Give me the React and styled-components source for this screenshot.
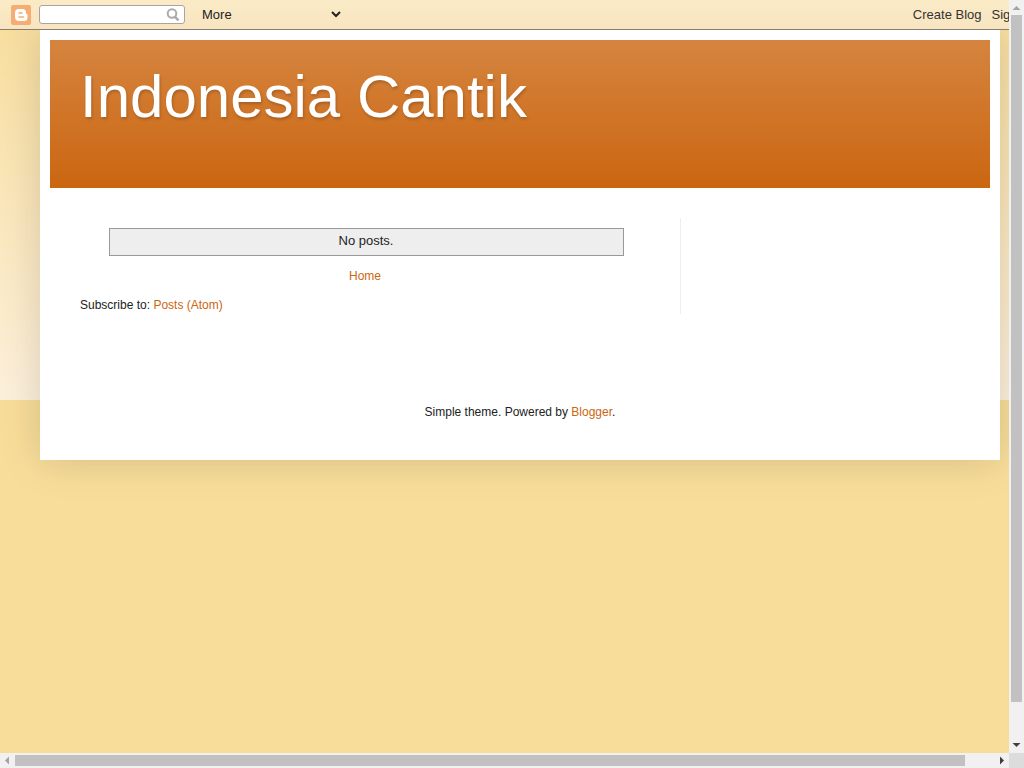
import React from 'react';
import styled, { createGlobalStyle } from 'styled-components';

const App = () => (
  <>
    <GlobalStyle />
    <Window>
      <Viewport>
        <Navbar>
          <LogoLink href="#blogger" aria-label="Blogger">
            <BloggerLogo />
          </LogoLink>
          <SearchForm role="search" onSubmit={(e) => e.preventDefault()}>
            <SearchInput type="text" name="q" aria-label="Search this blog" />
            <SearchButton type="submit" aria-label="Search">
              <SearchIcon />
            </SearchButton>
          </SearchForm>
          <MoreWrap>
            <MoreSelect aria-label="More" defaultValue="more">
              <option value="more">More</option>
              <option value="next">Next Blog</option>
            </MoreSelect>
            <ChevronIcon />
          </MoreWrap>
          <NavLinks>
            <a href="#create">Create Blog</a>
            <a href="#signin">Sign In</a>
          </NavLinks>
        </Navbar>

        <Content>
          <Header>
            <h1>Indonesia Cantik</h1>
          </Header>

          <Columns>
            <Main>
              <StatusMessage>No posts.</StatusMessage>
              <Pager>
                <a href="#home">Home</a>
              </Pager>
              <Feed>
                Subscribe to: <a href="#atom">Posts (Atom)</a>
              </Feed>
            </Main>
            <Sidebar />
          </Columns>

          <Footer>
            Simple theme. Powered by <a href="#blogger">Blogger</a>.
          </Footer>
        </Content>
      </Viewport>

      <Scrollbar $vertical>
        <Arrow direction="up" />
        <Track $vertical>
          <Thumb $size={687} />
          <Rest $size={36} />
        </Track>
        <Arrow direction="down" active />
      </Scrollbar>
      <Scrollbar>
        <Arrow direction="left" />
        <Track>
          <Thumb $size={950} />
          <Rest $size={29} />
        </Track>
        <Arrow direction="right" active />
      </Scrollbar>
      <Corner />
    </Window>
  </>
);

const BloggerLogo = () => (
  <svg width="20" height="20" viewBox="0 0 20 20" aria-hidden="true">
    <rect width="20" height="20" rx="2" fill="#f6ad73" />
    <path
      d="M8 4h3.500A3.500 3.500 0 0 1 15 7.500v.8c0 .5.3.8.8.8.4 0 .7.300.7.700V12.500A3.500 3.500 0 0 1 13 16H8a4 4 0 0 1-4-4V8a4 4 0 0 1 4-4z"
      fill="#fff"
    />
    <path d="M8 8h3M8 12h4.500" stroke="#f6ad73" strokeWidth="1.600" strokeLinecap="round" />
  </svg>
);

const SearchIcon = () => (
  <svg width="14" height="14" viewBox="0 0 14 14" fill="none" stroke="#aaa" aria-hidden="true">
    <circle cx="6" cy="5.500" r="4.300" strokeWidth="2" />
    <path d="M9 8.800l3.500 3.500" strokeWidth="2.400" />
  </svg>
);

const ChevronIcon = () => (
  <svg width="10" height="7" viewBox="0 0 10 7" fill="none" aria-hidden="true">
    <path d="M1 1l4 4 4-4" stroke="#222" strokeWidth="2" />
  </svg>
);

const arrows = {
  up: 'M3.500 10h8l-4-4z',
  down: 'M3.500 5h8l-4 4z',
  left: 'M9 3.500v8l-4-4z',
  right: 'M6 3.500v8l4-4z',
};

const Arrow = ({ direction, active }) => (
  <svg width="15" height="15" viewBox="0 0 15 15" aria-hidden="true">
    <path d={arrows[direction]} fill={active ? '#404040' : '#a3a3a3'} />
  </svg>
);

const GlobalStyle = createGlobalStyle`
  * {
    box-sizing: border-box;
  }

  body {
    margin: 0;
    color: #222;
    font: 12px/17px 'Liberation Sans', Arial, sans-serif;
  }

  a {
    color: #cc6611;
    text-decoration: none;
  }

  svg {
    display: block;
    flex: none;
  }
`;

const Window = styled.div`
  display: grid;
  grid-template-columns: minmax(0, 1fr) 15px;
  grid-template-rows: minmax(0, 1fr) 15px;
  height: 100vh;
`;

const Viewport = styled.div`
  overflow: hidden;
  background: #f8dd9a linear-gradient(#f8dd9a, #fdf0db) 0 0 / 100% 400px no-repeat;
`;

const Navbar = styled.nav`
  display: flex;
  align-items: center;
  min-width: 1040px;
  height: 30px;
  padding: 0 8px 0 11px;
  border-bottom: 1px solid #87806c;
  background: linear-gradient(#faebc6, #f8e4c0);
  font-size: 13px;
`;

const LogoLink = styled.a`
  margin-right: 8px;
`;

const SearchForm = styled.form`
  display: flex;
  align-items: center;
  width: 146px;
  height: 19px;
  border: 1px solid #a9a4a0;
  border-radius: 3px;
  background: #fff;
`;

const SearchInput = styled.input`
  flex: 1;
  min-width: 0;
  padding: 0 4px;
  border: 0;
  outline: 0;
  background: none;
  font: inherit;
`;

const SearchButton = styled.button`
  padding: 0 4px 0 0;
  border: 0;
  background: none;
`;

const MoreWrap = styled.div`
  display: flex;
  align-items: center;
  margin-left: 17px;
`;

const MoreSelect = styled.select`
  width: 129px;
  padding: 0;
  border: 0;
  appearance: none;
  background: none;
  color: #222;
  font: inherit;
`;

const NavLinks = styled.div`
  display: flex;
  gap: 10px;
  margin-left: auto;

  a {
    color: #333;
    white-space: nowrap;
  }
`;

const Content = styled.div`
  min-width: 960px;
  max-width: 960px;
  margin: 0 auto 0 40px;
  padding: 10px;
  background: #fff;
  box-shadow: 0 0 40px rgba(0, 0, 0, 0.15);
  clip-path: inset(0 -80px -80px);
`;

const Header = styled.header`
  min-height: 148px;
  padding: 22px 30px;
  background: linear-gradient(#d5843f, #cb6611);

  h1 {
    margin: 0;
    color: #fff;
    font-size: 60px;
    font-weight: normal;
    line-height: 69px;
    text-shadow: 1px 2px 3px rgba(0, 0, 0, 0.2);
  }
`;

const Columns = styled.div`
  display: grid;
  grid-template-columns: minmax(0, 1fr) 310px;
  padding-top: 30px;
`;

const Main = styled.main`
  padding: 10px 30px 0;
`;

const StatusMessage = styled.div`
  box-sizing: content-box;
  width: 90%;
  margin: 0 5%;
  padding: 3px 0 5px;
  border: 1px solid #999;
  background: #eee;
  font-size: 13px;
  line-height: 18px;
  text-align: center;
`;

const Pager = styled.div`
  margin: 12px 0;
  text-align: center;
`;

const Feed = styled.div`
  white-space: nowrap;
`;

const Sidebar = styled.aside`
  border-left: 1px solid #eee;
`;

const Footer = styled.footer`
  padding: 90px 0 29px;
  text-align: center;
`;

const Scrollbar = styled.div`
  display: flex;
  flex-direction: ${({ $vertical }) => ($vertical ? 'column' : 'row')};
  background: #f1f1f1;
`;

const Track = styled.div`
  display: flex;
  flex: 1;
  flex-direction: ${({ $vertical }) => ($vertical ? 'column' : 'row')};
  padding: ${({ $vertical }) => ($vertical ? '0 2px' : '2px 0')};
`;

const Thumb = styled.div`
  flex: ${({ $size }) => $size} 1 0;
  background: #c1c1c1;
`;

const Rest = styled.div`
  flex: ${({ $size }) => $size} 1 0;
`;

const Corner = styled.div`
  background: #dcdcdc;
`;

export default App;
